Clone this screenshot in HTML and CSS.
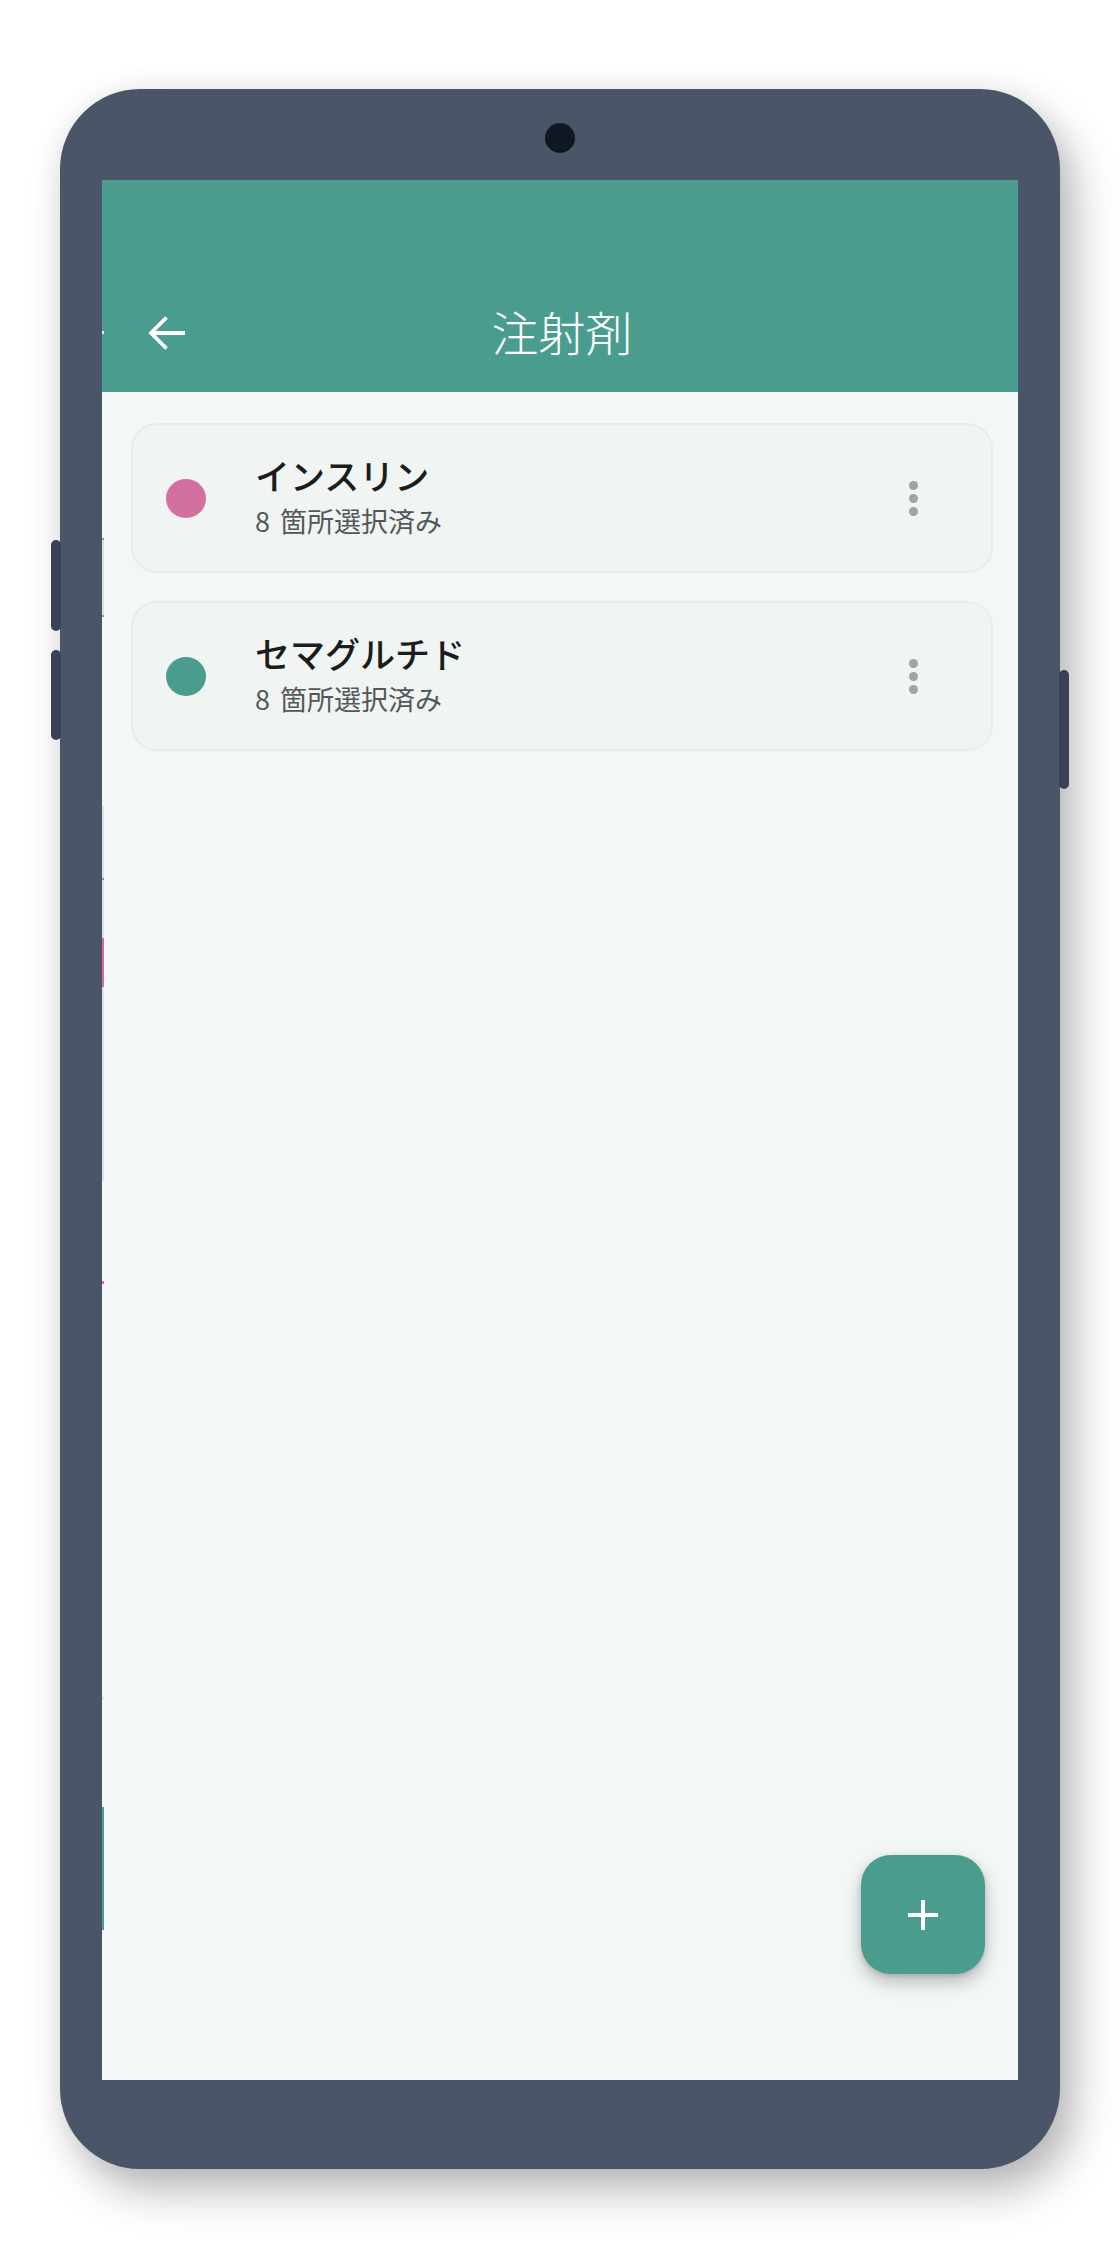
FILE: index.html
```html
<!DOCTYPE html>
<html lang="ja">
<head>
<meta charset="utf-8">
<title>注射剤</title>
<link rel="stylesheet" href="styles.css">
</head>
<body>
<div class="stage">
  <div class="phone">
    <span class="side-btn left-1"></span>
    <span class="side-btn left-2"></span>
    <span class="side-btn right-1"></span>
    <div class="bezel-top"><span class="camera"></span></div>
    <div class="screen">
      <span class="peek"></span>
      <header class="appbar">
        <div class="toolbar">
          <button class="back" aria-label="戻る">
            <svg width="38" height="36" viewBox="0 0 38 36" aria-hidden="true">
              <path d="M37 18 H3.5 M18.5 2.5 L3 18 L18.5 33.5" fill="none" stroke="#ffffff" stroke-width="3.8" stroke-linejoin="miter"/>
            </svg>
          </button>
          <h1 class="title">注射剤</h1>
          <span class="spacer"></span>
        </div>
      </header>
      <main class="list">
        <div class="card">
          <span class="dot pink"></span>
          <div class="text">
            <div class="name">インスリン</div>
            <div class="sub">8 箇所選択済み</div>
          </div>
          <span class="kebab"><i></i><i></i><i></i></span>
        </div>
        <div class="card">
          <span class="dot teal"></span>
          <div class="text">
            <div class="name">セマグルチド</div>
            <div class="sub">8 箇所選択済み</div>
          </div>
          <span class="kebab"><i></i><i></i><i></i></span>
        </div>
      </main>
      <button class="fab" aria-label="追加">
        <svg width="32" height="32" viewBox="0 0 32 32" aria-hidden="true">
          <path d="M16 1 V31 M1 16 H31" stroke="#ffffff" stroke-width="4" fill="none"/>
        </svg>
      </button>
    </div>
  </div>
</div>
</body>
</html>
```

FILE: styles.css
```css
* { box-sizing: border-box; }

html, body {
  margin: 0;
  padding: 0;
  background: #ffffff;
}

body {
  width: 1120px;
  height: 2260px;
  overflow: hidden;
  font-family: "Noto Sans CJK JP", "Noto Sans", sans-serif;
}

.stage {
  display: flex;
  justify-content: center;
  padding-top: 89px;
}

.phone {
  position: relative;
  width: 1000px;
  height: 2080px;
  background: #4a5568;
  border-radius: 80px;
  padding: 0 42px;
  box-shadow: 14px 22px 44px rgba(0, 0, 0, 0.28), 0 0 30px rgba(0, 0, 0, 0.06);
}

.side-btn {
  position: absolute;
  width: 10px;
  background: #394254;
  border-radius: 5px;
}
.side-btn.left-1 { left: -9px; top: 451px; height: 91px; }
.side-btn.left-2 { left: -9px; top: 561px; height: 90px; }
.side-btn.right-1 { right: -9px; top: 581px; height: 119px; }

.bezel-top {
  height: 91px;
  display: flex;
  justify-content: center;
  align-items: flex-start;
  padding-top: 34px;
}

.camera {
  width: 30px;
  height: 30px;
  border-radius: 50%;
  background: #111722;
}

.screen {
  position: relative;
  height: 1900px;
  background: #f3f7f6;
  display: flex;
  flex-direction: column;
  overflow: hidden;
}

.peek {
  position: absolute;
  left: 0;
  top: 0;
  width: 2px;
  height: 100%;
  z-index: 2;
  background: linear-gradient(to bottom,
    transparent 0, transparent 151px,
    #ffffff 151px, #ffffff 154px,
    transparent 154px, transparent 358px,
    #8c9994 358px, #8c9994 360px,
    #d2e5df 360px, #d2e5df 435px,
    #8c9994 435px, #8c9994 437px,
    transparent 437px, transparent 626px,
    #d5e7e2 626px, #d5e7e2 698px,
    #d06ea0 698px, #d06ea0 700px,
    #d5e7e2 700px, #d5e7e2 758px,
    #d06ea0 758px, #d06ea0 807px,
    #d5e7e2 807px, #d5e7e2 1001px,
    transparent 1001px, transparent 1101px,
    #d06ea0 1101px, #d06ea0 1104px,
    transparent 1104px, transparent 1517px,
    #e3e7e6 1517px, #e3e7e6 1520px,
    transparent 1520px, transparent 1627px,
    #4a9d8e 1627px, #4a9d8e 1750px,
    transparent 1750px);
}

.appbar {
  height: 212px;
  background: #4a9d8e;
  padding-top: 92px;
  flex: none;
}

.toolbar {
  height: 120px;
  display: grid;
  grid-template-columns: 1fr auto 1fr;
  align-items: center;
}

.back {
  justify-self: start;
  margin-left: 46px;
  margin-top: 2px;
  padding: 0;
  border: 0;
  background: none;
  display: flex;
}

.title {
  margin: -4px 0 0 0;
  color: #ffffff;
  font-size: 47px;
  font-weight: 300;
  line-height: 1;
  letter-spacing: 0;
  padding-left: 4px;
}

.list {
  padding: 31px 25px 0 29px;
  display: flex;
  flex-direction: column;
  gap: 28px;
}

.card {
  height: 150px;
  background: #f0f4f3;
  border: 2px solid #e9eceb;
  border-radius: 26px;
  display: flex;
  align-items: center;
  padding: 0 73px 0 33px;
}

.dot {
  width: 40px;
  height: 39px;
  border-radius: 50%;
  flex: none;
}
.dot.pink { background: #d3709f; }
.dot.teal { background: #4a9d8e; }

.text {
  flex: 1;
  margin-left: 49px;
  display: flex;
  flex-direction: column;
  margin-top: -2px;
}

.name {
  font-size: 35px;
  font-weight: 500;
  line-height: 40px;
  color: #1b1c1c;
}

.sub {
  margin-top: 8px;
  font-size: 27px;
  font-weight: 400;
  line-height: 36px;
  word-spacing: 4px;
  color: #545757;
}

.kebab {
  width: 9px;
  display: flex;
  flex-direction: column;
  gap: 4px;
  flex: none;
}
.kebab i {
  width: 9px;
  height: 9px;
  border-radius: 50%;
  background: #a2a2a2;
}

.fab {
  position: absolute;
  right: 33px;
  bottom: 106px;
  width: 124px;
  height: 119px;
  border: 0;
  padding: 0;
  border-radius: 30px;
  background: #4a9d8e;
  box-shadow: 0 8px 18px rgba(0, 0, 0, 0.25), 0 2px 5px rgba(0, 0, 0, 0.12);
  display: flex;
  align-items: center;
  justify-content: center;
}
```
